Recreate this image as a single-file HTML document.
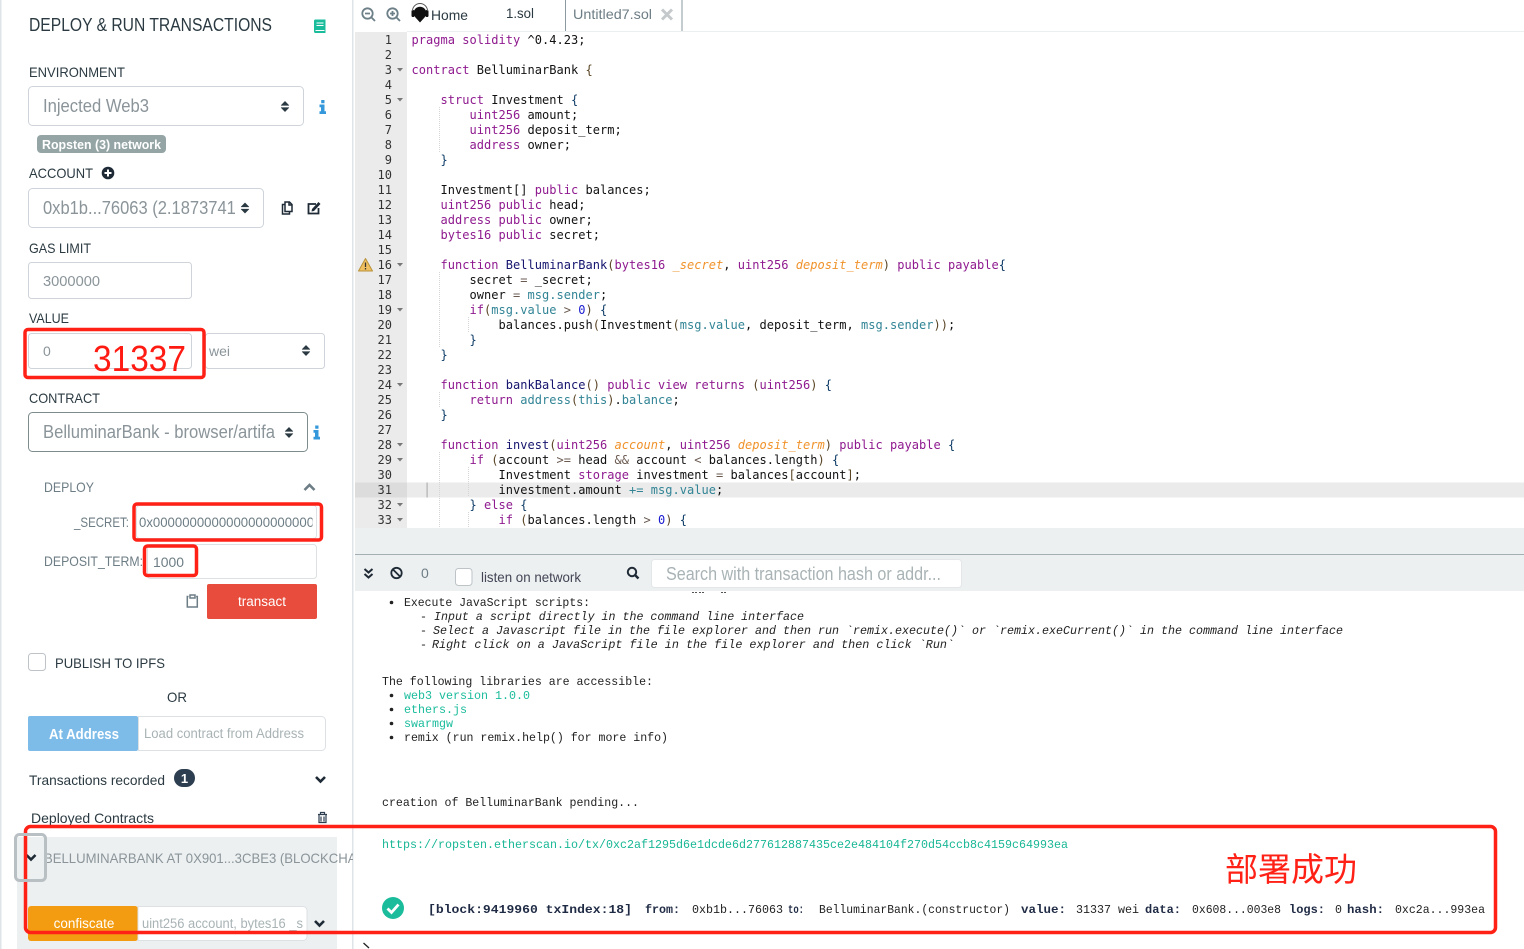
<!DOCTYPE html>
<html><head><meta charset="utf-8"><style>
html,body{margin:0;padding:0;background:#fff;width:1524px;height:949px;overflow:hidden}
svg{position:absolute;left:0;top:0}
text{font-family:"Liberation Sans","Noto Sans CJK SC",sans-serif;font-size:14px;fill:#2b3a42;white-space:pre}
.g{fill:#8a9499}.l{fill:#a9b3b5}.d{fill:#6d7d85}.w{fill:#fff}
.t{font-family:"Liberation Mono",monospace;font-size:11.6px;fill:#222}
.i{font-style:italic}.tb{font-weight:bold;fill:#1f2a44}
.ln{font-family:"DejaVu Sans Mono",monospace;font-size:12px;fill:#333;text-anchor:end}
pre{position:absolute;left:411.5px;top:32.5px;margin:0;font:12px/15px "DejaVu Sans Mono",monospace;letter-spacing:.025px;color:#111;height:495px;overflow:hidden}
.k{color:#8f1a8f}.f{color:#14146e}.p{color:#f0922a;font-style:italic}.m{color:#318495}.n{color:#1a1ad0}.o{color:#5a4526}.b{color:#0d3b66}.q{color:#6a5a50}
</style></head><body>
<svg width="1524" height="949" viewBox="0 0 1524 949">
<defs>
<g id="sort"><path d="M-3.800-1.200 0-5 3.800-1.200Z M-3.800 1.200 0 5 3.800 1.200Z" fill="#2b3a42" stroke="#2b3a42" stroke-width=".6" stroke-linejoin="round"/></g>
<g id="cd"><path d="M-4.500-2 0 2.500 4.500-2" fill="none" stroke="#1e2a35" stroke-width="2.600"/></g>
<g id="info"><path d="M-3.500-2.500H1.500V4.200H3V7H-3.500V4.200H-2V.3H-3.500Z M-1.800-7H1.500V-3.700H-1.800Z" fill="#3498db"/></g>
</defs>
<!-- sidebar edges -->
<rect x="0" y="0" width="1.500" height="949" fill="#dfe4e8"/>
<rect x="352" y="0" width="1.500" height="949" fill="#dfe4e8"/>
<!-- header -->
<text x="29" y="31" style="font-size:18px" textLength="243" lengthAdjust="spacingAndGlyphs">DEPLOY &amp; RUN TRANSACTIONS</text>
<path d="M315 19.500h10.500v13.500h-10a1.500 1.500 0 0 1-1.500-1.500v-10.500a1.500 1.500 0 0 1 1-1.500Z" fill="#1abc9c"/>
<path d="M316.500 23h7M316.500 25.500h7M315.500 30.500h9" stroke="#fff" stroke-width="1.100"/>
<text x="29" y="77" textLength="96" lengthAdjust="spacingAndGlyphs">ENVIRONMENT</text>
<rect x="28.500" y="86.500" width="275" height="39" rx="4" fill="#fff" stroke="#ced4da"/>
<text x="43" y="112" class="g" style="font-size:18px" textLength="106" lengthAdjust="spacingAndGlyphs">Injected Web3</text>
<use href="#sort" x="285" y="106.500"/>
<use href="#info" x="323" y="107"/>
<rect x="37" y="135" width="129" height="18" rx="4" fill="#95a5a6"/>
<text x="42" y="149" class="w" style="font-size:13px;font-weight:bold" textLength="119" lengthAdjust="spacingAndGlyphs">Ropsten (3) network</text>
<text x="29" y="178" textLength="64" lengthAdjust="spacingAndGlyphs">ACCOUNT</text>
<circle cx="108" cy="173" r="6.300" fill="#1e2a35"/><path d="M104.500 173h7M108 169.500v7" stroke="#fff" stroke-width="2"/>
<rect x="28.500" y="188.500" width="235" height="39" rx="4" fill="#fff" stroke="#ced4da"/>
<svg x="43" y="190" width="193" height="34"><text x="0" y="24" class="g" style="font-size:18px" textLength="202" lengthAdjust="spacingAndGlyphs">0xb1b...76063 (2.18737413</text></svg>
<use href="#sort" x="245" y="208"/>
<path d="M285.500 204.500h-3v9.500h7v-2.500M285 202v9.500h7v-7l-2.500-2.500Z M289 202v3h3" fill="none" stroke="#1e2a35" stroke-width="1.500"/>
<path d="M316 204h-7.500v9.500h10V208" fill="none" stroke="#1e2a35" stroke-width="1.800"/><path d="M312 209l6.500-7 2 2-6.500 7-2.500.500Z" fill="#1e2a35"/>
<text x="29" y="253" textLength="62" lengthAdjust="spacingAndGlyphs">GAS LIMIT</text>
<rect x="28.500" y="262.500" width="163" height="36" rx="3" fill="#fff" stroke="#ced4da"/>
<text x="43" y="286" class="g" style="font-size:14.500px" textLength="57" lengthAdjust="spacingAndGlyphs">3000000</text>
<text x="29" y="323" textLength="40" lengthAdjust="spacingAndGlyphs">VALUE</text>
<rect x="28.500" y="333.500" width="163" height="35" rx="3" fill="#fff" stroke="#ced4da"/>
<text x="43" y="356" class="g">0</text>
<rect x="205.500" y="333.500" width="119" height="35" rx="3" fill="#fff" stroke="#ced4da"/>
<text x="209" y="356" class="g" textLength="21" lengthAdjust="spacingAndGlyphs">wei</text>
<use href="#sort" x="306" y="350.500"/>
<text x="29" y="403" textLength="71" lengthAdjust="spacingAndGlyphs">CONTRACT</text>
<rect x="28.500" y="412.500" width="279" height="39" rx="4" fill="#fff" stroke="#7f8c8d"/>
<text x="43" y="438" class="g" style="font-size:18px" textLength="232" lengthAdjust="spacingAndGlyphs">BelluminarBank - browser/artifa</text>
<use href="#sort" x="289" y="432.500"/>
<use href="#info" x="317" y="432.500"/>
<text x="44" y="492" class="d" textLength="50" lengthAdjust="spacingAndGlyphs">DEPLOY</text>
<path d="M304.500 490 309.500 485 314.500 490" fill="none" stroke="#6d7d85" stroke-width="2.600"/>
<text x="74" y="527" class="d" textLength="55" lengthAdjust="spacingAndGlyphs">_SECRET:</text>
<rect x="136.500" y="505.500" width="180" height="33" rx="3" fill="#fff" stroke="#dde1e4"/>
<svg x="139" y="505" width="173.500" height="32"><text x="0" y="22" class="d" textLength="197" lengthAdjust="spacingAndGlyphs">0x0000000000000000000000000</text></svg>
<text x="44" y="566" class="d" textLength="99" lengthAdjust="spacingAndGlyphs">DEPOSIT_TERM:</text>
<rect x="147.500" y="544.500" width="169" height="34" rx="3" fill="#fff" stroke="#dde1e4"/>
<text x="153" y="567" class="d" textLength="31" lengthAdjust="spacingAndGlyphs">1000</text>
<path d="M188.500 596.500h-1.200v10.500h10v-10.500h-1.200M190 595h5v3h-5Z" fill="none" stroke="#6d7d85" stroke-width="1.500"/>
<rect x="207" y="584" width="110" height="35" rx="2" fill="#e74c3c"/>
<text x="262" y="606" class="w" text-anchor="middle" style="font-size:13.500px">transact</text>
<rect x="28.500" y="653.500" width="17" height="17" rx="3" fill="#fff" stroke="#bdc3c7"/>
<text x="55" y="668" textLength="110" lengthAdjust="spacingAndGlyphs">PUBLISH TO IPFS</text>
<text x="167" y="702" textLength="20" lengthAdjust="spacingAndGlyphs">OR</text>
<rect x="28" y="716" width="110" height="35" rx="2" fill="#7dbbe9"/>
<text x="49" y="739" class="w" style="font-size:15px;font-weight:bold" textLength="70" lengthAdjust="spacingAndGlyphs">At Address</text>
<path d="M138.500 716.500h183a4 4 0 0 1 4 4v26a4 4 0 0 1-4 4h-183Z" fill="#fff" stroke="#dde1e4"/>
<text x="144" y="738" class="l" style="font-size:13.500px" textLength="160" lengthAdjust="spacingAndGlyphs">Load contract from Address</text>
<text x="29" y="785" textLength="136" lengthAdjust="spacingAndGlyphs">Transactions recorded</text>
<rect x="174" y="769" width="21" height="18" rx="9" fill="#2c3e50"/>
<text x="184.500" y="783" class="w" text-anchor="middle" style="font-size:13px;font-weight:bold">1</text>
<use href="#cd" x="320.500" y="779"/>
<text x="31" y="823" textLength="123" lengthAdjust="spacingAndGlyphs">Deployed Contracts</text>
<path d="M318 814.500h9M320.500 814v-1.500h4v1.500M319 815v7.500h7V815M321 816.500v5M324 816.500v5" fill="none" stroke="#2c3e50" stroke-width="1.200"/>
<!-- deployed panel -->
<rect x="17" y="837" width="320" height="112" fill="#ecf0f1"/>
<use href="#cd" x="31" y="857"/>
<svg x="44" y="845" width="309" height="30"><text x="0" y="18" class="g" textLength="330" lengthAdjust="spacingAndGlyphs">BELLUMINARBANK AT 0X901...3CBE3 (BLOCKCHAIN)</text></svg>
<rect x="28" y="906" width="110" height="35" rx="3" fill="#f39c12"/>
<text x="84" y="928" class="w" text-anchor="middle" style="font-size:13.500px">confiscate</text>
<path d="M138 906.500h165a4 4 0 0 1 4 4v26a4 4 0 0 1-4 4h-165Z" fill="#fff" stroke="#dde1e4"/>
<text x="142" y="928" class="l" style="font-size:13.500px" textLength="161" lengthAdjust="spacingAndGlyphs">uint256 account, bytes16 _s</text>
<use href="#cd" x="319.500" y="923"/>
<!-- tabs -->
<g fill="none" stroke="#6d8088" stroke-width="1.800"><circle cx="367.500" cy="13.500" r="5.200"/><path d="M371.500 17.500 375 21M365 13.500h5"/><circle cx="392.500" cy="13.500" r="5.200"/><path d="M396.500 17.500 400 21M390 13.500h5M392.500 11v5"/></g>
<circle cx="420" cy="13" r="6.300" fill="#111"/><rect x="411.500" y="10" width="3" height="7" rx="1.400" fill="#111"/><rect x="425.500" y="10" width="3" height="7" rx="1.400" fill="#111"/><path d="M415.500 17.500 420 22.500 424.500 17.500Z" fill="#111"/><path d="M412.500 11a7.500 7.500 0 0 1 15 0" fill="none" stroke="#555" stroke-width="1"/>
<text x="431" y="20" textLength="37" lengthAdjust="spacingAndGlyphs" fill="#333">Home</text>
<text x="506" y="18" textLength="28" lengthAdjust="spacingAndGlyphs" fill="#444">1.sol</text>
<path d="M565.500 31V0M682 31V0" stroke="#8a9a9f" stroke-width="1"/>
<text x="573" y="19" class="d" textLength="79" lengthAdjust="spacingAndGlyphs">Untitled7.sol</text>
<path d="M662 9.500 672 19.500M672 9.500 662 19.500" stroke="#c5c9cb" stroke-width="3"/>
<rect x="407" y="31" width="1117" height="1" fill="#eceff0"/>
<!-- gutter -->
<rect x="355" y="32" width="52" height="496" fill="#ebebeb"/>
<rect x="407" y="482.500" width="1117" height="15" fill="#ebebeb"/>
<rect x="355" y="482.500" width="52" height="15" fill="#dcdcdc"/>
<rect x="426.500" y="482.500" width="1.200" height="15" fill="#b0b0b0"/>
<g stroke="#d5d5d5" stroke-dasharray="1 1" stroke-width="1">
<path d="M439.500 107v45M439.500 272v75M439.500 392v15M439.500 452v76M468.500 317v15M468.500 467v30M468.500 512v16"/></g>
<g class="nums">
<text class="ln" x="392" y="44">1</text><text class="ln" x="392" y="59">2</text><text class="ln" x="392" y="74">3</text><text class="ln" x="392" y="89">4</text><text class="ln" x="392" y="104">5</text><text class="ln" x="392" y="119">6</text><text class="ln" x="392" y="134">7</text><text class="ln" x="392" y="149">8</text><text class="ln" x="392" y="164">9</text><text class="ln" x="392" y="179">10</text><text class="ln" x="392" y="194">11</text><text class="ln" x="392" y="209">12</text><text class="ln" x="392" y="224">13</text><text class="ln" x="392" y="239">14</text><text class="ln" x="392" y="254">15</text><text class="ln" x="392" y="269">16</text><text class="ln" x="392" y="284">17</text><text class="ln" x="392" y="299">18</text><text class="ln" x="392" y="314">19</text><text class="ln" x="392" y="329">20</text><text class="ln" x="392" y="344">21</text><text class="ln" x="392" y="359">22</text><text class="ln" x="392" y="374">23</text><text class="ln" x="392" y="389">24</text><text class="ln" x="392" y="404">25</text><text class="ln" x="392" y="419">26</text><text class="ln" x="392" y="434">27</text><text class="ln" x="392" y="449">28</text><text class="ln" x="392" y="464">29</text><text class="ln" x="392" y="479">30</text><text class="ln" x="392" y="494">31</text><text class="ln" x="392" y="509">32</text><text class="ln" x="392" y="524">33</text>
</g>
<g fill="#777"><path d="M397 68h6l-3 3.500Z"/><path d="M397 98h6l-3 3.500Z"/><path d="M397 263h6l-3 3.500Z"/><path d="M397 308h6l-3 3.500Z"/><path d="M397 383h6l-3 3.500Z"/><path d="M397 443h6l-3 3.500Z"/><path d="M397 458h6l-3 3.500Z"/><path d="M397 503h6l-3 3.500Z"/><path d="M397 518h6l-3 3.500Z"/></g>
<path d="M365.500 258.500 372.500 271H358.500Z" fill="#f0c060" stroke="#b8923a" stroke-width="1" stroke-linejoin="round"/><path d="M365.500 262.500v4.500M365.500 268v1.500" stroke="#333" stroke-width="1.300"/>
<!-- terminal bars -->
<rect x="355" y="528" width="1169" height="26" fill="#edf0f1"/>
<rect x="355" y="554" width="1169" height="1" fill="#a3afb3"/>
<rect x="355" y="555" width="1169" height="36" fill="#edf0f1"/>
<path d="M364.500 569 368.500 572.500 372.500 569M364.500 574 368.500 577.500 372.500 574" fill="none" stroke="#1e2a35" stroke-width="2"/>
<circle cx="396.500" cy="573" r="5.200" fill="none" stroke="#1e2a35" stroke-width="1.800"/><path d="M393 569.500 400 576.500" stroke="#1e2a35" stroke-width="1.800"/>
<text x="421" y="578" class="d">0</text>
<rect x="455.500" y="568.500" width="16.500" height="17" rx="3" fill="#fff" stroke="#bdc3c7"/>
<text x="481" y="582" textLength="100" lengthAdjust="spacingAndGlyphs" style="fill:#445">listen on network</text>
<circle cx="632" cy="572" r="4.200" fill="none" stroke="#1e2a35" stroke-width="2"/><path d="M635 575 638.500 578.500" stroke="#1e2a35" stroke-width="2.400"/>
<rect x="651.500" y="559.500" width="310" height="28" rx="3" fill="#fff" stroke="#e3e7e9"/>
<text x="666" y="580" class="l" style="font-size:18px" textLength="275" lengthAdjust="spacingAndGlyphs">Search with transaction hash or addr...</text>
<!-- terminal output -->
<g>
<path d="M692 592.500h5M699 592.500h5M721 592.500h5" stroke="#555" stroke-width="1" stroke-dasharray="2 1"/>
<circle cx="391.500" cy="602.500" r="1.800" fill="#222"/>
<text class="t" x="404" y="606" textLength="186" lengthAdjust="spacingAndGlyphs">Execute JavaScript scripts:</text>
<text class="t" x="420" y="620">-</text><text class="t i" x="434" y="620" textLength="370" lengthAdjust="spacingAndGlyphs">Input a script directly in the command line interface</text>
<text class="t" x="420" y="634">-</text><text class="t i" x="433" y="634" textLength="910" lengthAdjust="spacingAndGlyphs">Select a Javascript file in the file explorer and then run `remix.execute()` or `remix.exeCurrent()` in the command line interface</text>
<text class="t" x="420" y="648">-</text><text class="t i" x="432" y="648" textLength="522" lengthAdjust="spacingAndGlyphs">Right click on a JavaScript file in the file explorer and then click `Run`</text>
<text class="t" x="382" y="685" textLength="271" lengthAdjust="spacingAndGlyphs">The following libraries are accessible:</text>
<circle cx="391.500" cy="695.500" r="1.800" fill="#222"/><text class="t" x="404" y="699" style="fill:#1abc9c" textLength="126" lengthAdjust="spacingAndGlyphs">web3 version 1.0.0</text>
<circle cx="391.500" cy="709.500" r="1.800" fill="#222"/><text class="t" x="404" y="713" style="fill:#1abc9c" textLength="63" lengthAdjust="spacingAndGlyphs">ethers.js</text>
<circle cx="391.500" cy="723.500" r="1.800" fill="#222"/><text class="t" x="404" y="727" style="fill:#1abc9c" textLength="49" lengthAdjust="spacingAndGlyphs">swarmgw</text>
<circle cx="391.500" cy="737.500" r="1.800" fill="#222"/><text class="t" x="404" y="741" textLength="264" lengthAdjust="spacingAndGlyphs">remix (run remix.help() for more info)</text>
<text class="t" x="382" y="806" textLength="257" lengthAdjust="spacingAndGlyphs">creation of BelluminarBank pending...</text>
<text class="t" x="382" y="848" style="fill:#18b795" textLength="686" lengthAdjust="spacingAndGlyphs">https://ropsten.etherscan.io/tx/0xc2af1295d6e1dcde6d277612887435ce2e484104f270d54ccb8c4159c64993ea</text>
<circle cx="393" cy="908" r="11" fill="#1abc9c"/><path d="M387.500 908.500 391.500 912.500 398.500 904.500" fill="none" stroke="#fff" stroke-width="2.800"/>
<text class="t tb" x="428" y="913" textLength="204" lengthAdjust="spacingAndGlyphs">[block:9419960 txIndex:18]</text>
<text class="t tb" x="645" y="913" textLength="35" lengthAdjust="spacingAndGlyphs">from:</text>
<text class="t" x="692" y="913" textLength="91" lengthAdjust="spacingAndGlyphs">0xb1b...76063</text>
<text class="t tb" x="788" y="913" textLength="16" lengthAdjust="spacingAndGlyphs">to:</text>
<text class="t" x="819" y="913" textLength="191" lengthAdjust="spacingAndGlyphs">BelluminarBank.(constructor)</text>
<text class="t tb" x="1021" y="913" textLength="45" lengthAdjust="spacingAndGlyphs">value:</text>
<text class="t" x="1076" y="913" textLength="63" lengthAdjust="spacingAndGlyphs">31337 wei</text>
<text class="t tb" x="1145" y="913" textLength="36" lengthAdjust="spacingAndGlyphs">data:</text>
<text class="t" x="1192" y="913" textLength="89" lengthAdjust="spacingAndGlyphs">0x608...003e8</text>
<text class="t tb" x="1289" y="913" textLength="36" lengthAdjust="spacingAndGlyphs">logs:</text>
<text class="t" x="1335" y="913">0</text>
<text class="t tb" x="1347" y="913" textLength="37" lengthAdjust="spacingAndGlyphs">hash:</text>
<text class="t" x="1395" y="913" textLength="90" lengthAdjust="spacingAndGlyphs">0xc2a...993ea</text>
<path d="M363.500 943 369 948" stroke="#222" stroke-width="1.300"/>
</g>
<!-- annotations -->
<g fill="none" stroke="#ff2016" stroke-width="3.500">
<rect x="25" y="329.500" width="179" height="48" rx="3"/>
<rect x="134" y="504" width="187.500" height="36" rx="3"/>
<rect x="144.500" y="546" width="52" height="29.500" rx="3"/>
<rect x="25.500" y="826.500" width="1470" height="106" rx="5"/>
</g>
<rect x="15.500" y="834.500" width="30" height="46" rx="4" fill="none" stroke="#b9c0c4" stroke-width="3"/>
<text x="93" y="371" style="font-size:36px;fill:#ff1a12" textLength="93" lengthAdjust="spacingAndGlyphs">31337</text>
<text x="1225" y="881" style="font-size:33px;fill:#ff2016;font-family:'Noto Sans CJK SC',sans-serif" textLength="132">部署成功</text>
</svg>
<pre><span class="k">pragma solidity</span> ^0.4.23;

<span class="k">contract</span> BelluminarBank <span class="o">{</span>

    <span class="k">struct</span> Investment <span class="b">{</span>
        <span class="k">uint256</span> amount;
        <span class="k">uint256</span> deposit_term;
        <span class="k">address</span> owner;
    <span class="b">}</span>

    Investment[] <span class="k">public</span> balances;
    <span class="k">uint256 public</span> head;
    <span class="k">address public</span> owner;
    <span class="k">bytes16 public</span> secret;

    <span class="k">function</span> <span class="f">BelluminarBank</span><span class="o">(</span><span class="k">bytes16</span> <span class="p">_secret</span>, <span class="k">uint256</span> <span class="p">deposit_term</span><span class="o">)</span> <span class="k">public payable</span><span class="b">{</span>
        secret <span class="q">=</span> _secret;
        owner <span class="q">=</span> <span class="m">msg.sender</span>;
        <span class="k">if</span><span class="o">(</span><span class="m">msg.value</span> <span class="q">&gt;</span> <span class="n">0</span><span class="o">)</span> <span class="b">{</span>
            balances.push<span class="o">(</span>Investment<span class="o">(</span><span class="m">msg.value</span>, deposit_term, <span class="m">msg.sender</span><span class="o">))</span>;
        <span class="b">}</span>
    <span class="b">}</span>

    <span class="k">function</span> <span class="f">bankBalance</span><span class="o">()</span> <span class="k">public view returns</span> <span class="o">(</span><span class="k">uint256</span><span class="o">)</span> <span class="b">{</span>
        <span class="k">return</span> <span class="m">address</span><span class="o">(</span><span class="m">this</span><span class="o">)</span>.<span class="m">balance</span>;
    <span class="b">}</span>

    <span class="k">function</span> <span class="f">invest</span><span class="o">(</span><span class="k">uint256</span> <span class="p">account</span>, <span class="k">uint256</span> <span class="p">deposit_term</span><span class="o">)</span> <span class="k">public payable</span> <span class="b">{</span>
        <span class="k">if</span> <span class="o">(</span>account <span class="q">&gt;=</span> head <span class="q">&amp;&amp;</span> account <span class="q">&lt;</span> balances.length<span class="o">)</span> <span class="b">{</span>
            Investment <span class="k">storage</span> investment <span class="q">=</span> balances<span class="o">[</span>account<span class="o">]</span>;
            investment.amount <span class="m">+=</span> <span class="m">msg.value</span>;
        <span class="b">}</span> <span class="k">else</span> <span class="b">{</span>
            <span class="k">if</span> <span class="o">(</span>balances.length <span class="q">&gt;</span> <span class="n">0</span><span class="o">)</span> <span class="b">{</span></pre>
</body></html>
